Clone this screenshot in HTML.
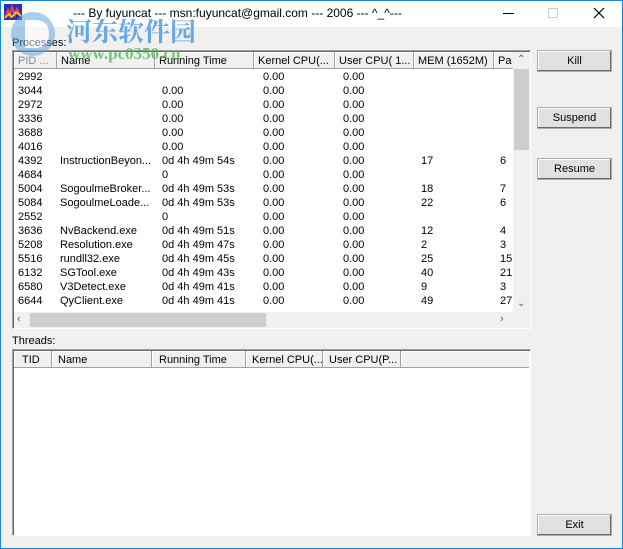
<!DOCTYPE html><html><head><style>
*{margin:0;padding:0;box-sizing:border-box}
body{width:623px;height:549px;overflow:hidden;background:#f0f0f0;font-family:"Liberation Sans",sans-serif;font-size:11px;color:#000;position:relative}
.a{position:absolute}
.win{position:absolute;left:0;top:0;width:623px;height:549px;border:1px solid #1883d7;z-index:20;pointer-events:none}
.tb{left:1px;top:1px;width:621px;height:26px;background:#fff}
.box{background:#fff;border-top:1px solid #a0a0a0;border-left:1px solid #a0a0a0;border-right:1px solid #fff;border-bottom:1px solid #fff;box-shadow:inset 1px 1px 0 #696969}
.h{position:absolute;height:17px;background:#f0f0f0;border-right:1px solid #a0a0a0;border-bottom:1px solid #a0a0a0;box-shadow:inset 1px 1px 0 #fff;padding:3px 0 0 4px;white-space:nowrap;overflow:hidden;font-size:11px}
.r{position:absolute;white-space:nowrap;font-size:11px}
.btn{position:absolute;left:537px;width:75px;height:22px;background:#e1e1e1;border:1px solid #adadad;box-shadow:inset -1px -1px 0 #696969,inset 1px 1px 0 #fff;text-align:center;line-height:20px}
.wm{z-index:10}
</style></head><body>
<div class="win"></div>
<div class="a tb"></div>
<svg class="a" style="left:4px;top:4px" width="18" height="16"><rect width="18" height="16" fill="#2030c0"/><path d="M1 14 L4 6 L6 12 L8 3 L11 11 L13 5 L17 13" stroke="#ff4040" stroke-width="2" fill="none"/><path d="M1 14 L5 10 L8 13 L12 8 L17 12" stroke="#ffe000" stroke-width="1.5" fill="none"/></svg>
<div class="a" style="left:73px;top:6px;font-size:12px;color:#000">--- By fuyuncat --- msn:fuyuncat@gmail.com --- 2006 --- ^_^---</div>
<div class="a" style="left:503px;top:13px;width:11px;height:1px;background:#000"></div>
<div class="a" style="left:548px;top:8px;width:10px;height:10px;border:1px solid #ccc"></div>
<svg class="a" style="left:593px;top:7px" width="12" height="12"><path d="M1 1L11 11M11 1L1 11" stroke="#000" stroke-width="1.2"/></svg>
<svg class="a wm" style="left:5px;top:10px;opacity:.5" width="60" height="50"><circle cx="28" cy="24" r="22" fill="#5aa0d8"/><path d="M20 10 L30 10 Q44 10 44 24 Q44 38 30 38 L20 38Z" fill="#fff"/></svg>
<div class="a wm" style="left:66px;top:12px;font-size:26px;font-weight:bold;color:#3a8fe0;opacity:.75;font-family:'Noto Serif CJK SC','Noto Sans CJK SC',serif">河东软件园</div>
<div class="a wm" style="left:68px;top:44px;font-size:17px;font-weight:bold;color:#47b140;opacity:.7;font-family:'Liberation Serif',serif">www.pc0350.cn</div>
<div class="a" style="left:12px;top:37px;color:#000">Processes:</div>
<div class="a box" style="left:12px;top:50px;width:519px;height:279px"></div>
<div class="h" style="left:14px;top:52px;width:43px;color:#888">PID ...</div>
<div class="h" style="left:57px;top:52px;width:98px">Name</div>
<div class="h" style="left:155px;top:52px;width:99px">Running Time</div>
<div class="h" style="left:254px;top:52px;width:81px">Kernel CPU(...</div>
<div class="h" style="left:335px;top:52px;width:79px">User CPU( 1...</div>
<div class="h" style="left:414px;top:52px;width:80px">MEM (1652M)</div>
<div class="h" style="left:494px;top:52px;width:19px;border-right:none">Pa</div>
<div class="a" style="left:513px;top:52px;width:17px;height:260px;background:#f0f0f0"></div>
<div class="a" style="left:514px;top:69px;width:15px;height:81px;background:#cdcdcd"></div>
<div class="a" style="left:517px;top:54px;font-size:10px;color:#606060">&#8963;</div>
<div class="a" style="left:517px;top:298px;font-size:10px;color:#606060">&#8964;</div>
<div class="a" style="left:14px;top:312px;width:516px;height:16px;background:#f0f0f0"></div>
<div class="a" style="left:30px;top:313px;width:236px;height:14px;background:#cdcdcd"></div>
<div class="a" style="left:17px;top:313px;font-size:11px;color:#606060">&lsaquo;</div>
<div class="a" style="left:500px;top:313px;font-size:11px;color:#606060">&rsaquo;</div>
<div id="rows"></div>
<div class="a" style="left:12px;top:335px">Threads:</div>
<div class="a box" style="left:12px;top:349px;width:519px;height:187px"></div>
<div class="h" style="left:14px;top:351px;width:38px;padding-left:8px">TID</div>
<div class="h" style="left:52px;top:351px;width:100px;padding-left:6px">Name</div>
<div class="h" style="left:152px;top:351px;width:94px;padding-left:7px">Running Time</div>
<div class="h" style="left:246px;top:351px;width:77px;padding-left:6px">Kernel CPU(...</div>
<div class="h" style="left:323px;top:351px;width:78px;padding-left:6px">User CPU(P...</div>
<div class="h" style="left:401px;top:351px;width:128px;border-right:none"></div>
<div class="btn" style="top:50px">Kill</div>
<div class="btn" style="top:107px">Suspend</div>
<div class="btn" style="top:158px">Resume</div>
<div class="btn" style="top:514px">Exit</div>
<script>
var d=[["2992","","","0.00","0.00","",""],["3044","","0.00","0.00","0.00","",""],["2972","","0.00","0.00","0.00","",""],["3336","","0.00","0.00","0.00","",""],["3688","","0.00","0.00","0.00","",""],["4016","","0.00","0.00","0.00","",""],["4392","InstructionBeyon...","0d 4h 49m 54s","0.00","0.00","17","6"],["4684","","0","0.00","0.00","",""],["5004","SogoulmeBroker...","0d 4h 49m 53s","0.00","0.00","18","7"],["5084","SogoulmeLoade...","0d 4h 49m 53s","0.00","0.00","22","6"],["2552","","0","0.00","0.00","",""],["3636","NvBackend.exe","0d 4h 49m 51s","0.00","0.00","12","4"],["5208","Resolution.exe","0d 4h 49m 47s","0.00","0.00","2","3"],["5516","rundll32.exe","0d 4h 49m 45s","0.00","0.00","25","15"],["6132","SGTool.exe","0d 4h 49m 43s","0.00","0.00","40","21"],["6580","V3Detect.exe","0d 4h 49m 41s","0.00","0.00","9","3"],["6644","QyClient.exe","0d 4h 49m 41s","0.00","0.00","49","27"]];
var x=[18,60,162,263,343,421,500],h="";
d.forEach(function(r,i){r.forEach(function(c,j){if(c)h+='<div class="r" style="left:'+x[j]+'px;top:'+(71+i*14)+'px">'+c+'</div>';});});
document.getElementById("rows").innerHTML=h;
</script>
</body></html>
